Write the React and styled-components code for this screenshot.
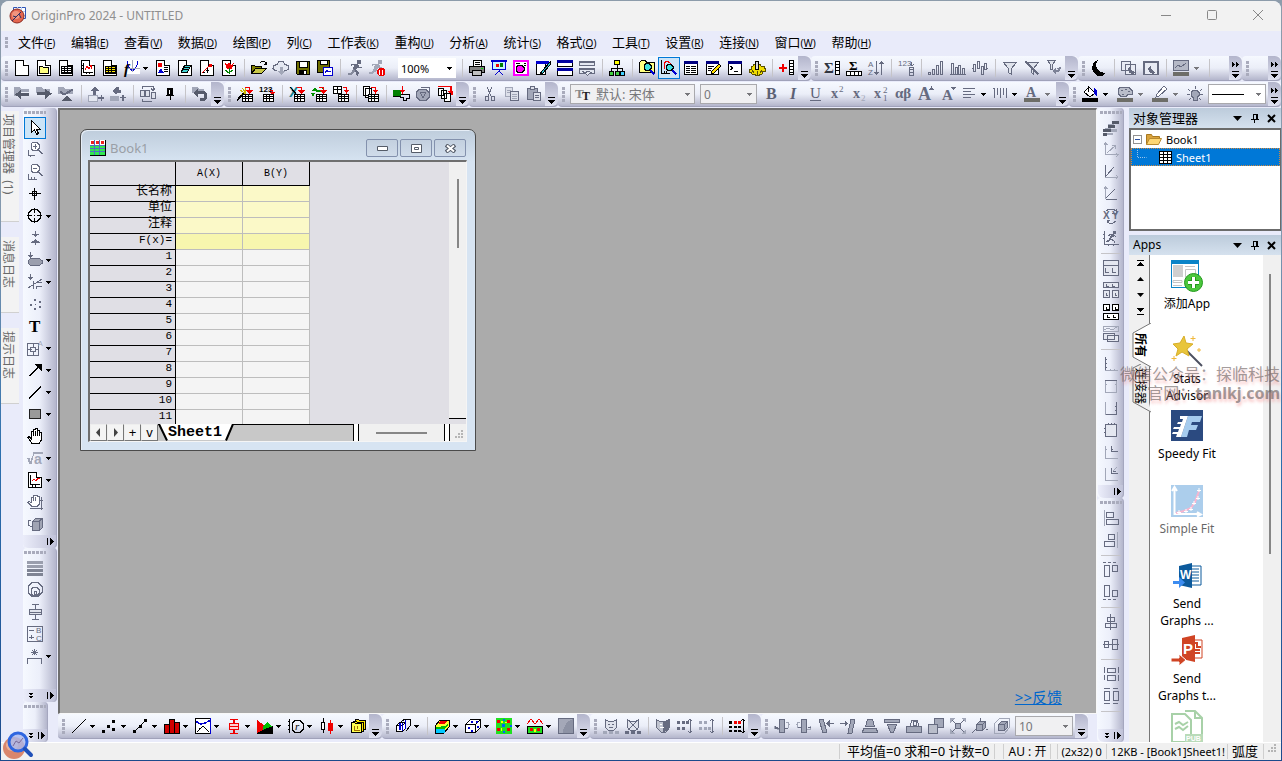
import styled, { createGlobalStyle, css } from 'styled-components';

const GlobalStyle = createGlobalStyle`
  *{ box-sizing:border-box; }
  body{
    margin:0;
    font-family:"Noto Sans","Noto Sans CJK SC",sans-serif;
    font-size:12px;
    color:#000;
    overflow:hidden;
  }
  button,select{ font:inherit; color:inherit; }
`;

const K = '#000';
const G = '#666b80';
const D = '#a2a7b8';
const W = '#fff';
const R = '#f00000';
const B = '#0000d0';
const Y = '#ffff80';
const N = 'none';
const SERIF = '"Liberation Serif",serif';
const SANS = '"Liberation Sans",sans-serif';

const page = [[K, W, 'M1.5.5h8l5 5v10h-13z'], [K, W, 'M9.5.5v5h5']];
const grid = (x, y, c = K, f = W) => [[c, f, `M${x}.5 ${y}.5h10v7h-10z`], [c, N, `M${x + 3}.5 ${y}v8M${x + 6}.5 ${y}v8M${x} ${y + 2}.5h10M${x} ${y + 4}.5h10`]];
const redArrow = [[R, N, 'M8 1.5h4.5v4'], [N, R, 'M9 4h7l-3.500 4z']];
const cube = (x, y, c, f = N) => [[c, f, `M${x}.5 ${y + 3}.5h6v6h-6zl3-3h6v6l-3 3M${x + 6}.5 ${y + 3}.5l3-3`]];

// every icon lives on a 16x16 board: [stroke, fill, path] or { t: text }
const icons = {
  newProject: page,
  newFolder: [...page, [K, Y, 'M3.5 6.500h3l1 1h5v6h-9z']],
  newSheet: [...page, ...grid(3, 6), [K, N, 'M3 12.500h10v1']],
  newGraph: [...page, [K, N, 'M3.500 3v9.500h9M2 5.500h1M2 8.500h1M6.500 13v1M9.500 13v1'], [R, N, 'M5 10l2-4 2 3 2-4 1 4']],
  newMatrix: [...page, ...grid(3, 6, K, '#ffe800'), [K, N, 'M3 12.500h10v1']],
  newFunction: [[N, W, 'M3 0h13v14h-13z'], [B, N, 'M3.500 1v3l2 4 3 3 3-3 2-4v-3'], [D, N, 'M3 8.500h13M8.500 0v12'], { t: 'f', x: 0, y: 14, z: 15, i: 1, w: 700, ff: SERIF }],
  newLayout: [...page, [N, R, 'M3 3h4v4h-4z'], [N, B, 'M3 13l3-5 3 5z'], [K, N, 'M9 7.500h4M9 9.500h4M9 11.500h4']],
  newNotes: [...page, [K, '#40d0d0', 'M4.500 11.500l3-6h6l-3 7h-6z'], [K, N, 'M6 9.500h5M7 7.500h5']],
  newImage: [...page, [R, N, 'M3 13l9-9'], [K, N, 'M7 10.500h3M8.500 8v5M4 12.500h2'], [N, R, 'M10 4h3v3h-3z']],
  newTulip: [...page, [N, R, 'M4 3l2 2 2-3 2 3 3-2-2 6h-5z'], ['#008000', N, 'M8.500 8v6M4 10l4 3 4-3M5 10l3 3 3-3']],
  open: [[K, '#808000', 'M.5 5.500h3l1 1h6v7h-10z'], [K, '#c8c848', 'M.5 13.500l4-5h11l-5 5z'], [K, N, 'M9 3l2-2 3 1 1 2M13 4.500h2v-3']],
  cloud: [[G, '#e4e8f2', 'M4 10.500h-2l-2-2 1-3 3-1 2-3h4l2 3 3 1v4l-2 1h-2'], [N, D, 'M7 7h3v4h2l-3.500 4-3.500-4h2z']],
  save: [[K, '#707000', 'M1.500 1.500h13v13h-12l-1-1z'], [K, W, 'M4.500 1.500h8v6h-8z'], [N, K, 'M4 10h8v5h-8z'], [N, W, 'M9 11h2v3h-2z']],
  saveTemplate: [[K, '#707000', 'M.5.5h12v12h-12z'], [K, W, 'M3.500.5h7v4h-7z'], [B, W, 'M6.500 7.500h9v8h-9z'], [B, N, 'M8 13l2-3 1 2 3-1']],
  run: [[G, N, 'M5 4.500h3l3 1 1 2h3M4 6l1-2'], [N, G, 'M10 0h4v4h-4zM7 4h4l1 2-3 4 3 2-1 4-2-1v-2l-3-3z'], [N, '#858a9c', 'M6 9l2 2-3 4h-4v-2h3z']],
  runStop: [[D, N, 'M4 4.500h3l3 1 1 2h2M3 6l1-2'], [N, D, 'M9 0h4v4h-4zM6 4h4l1 2-3 4-2 2-3 2h-3v-2h3l2-4z'], [N, R, 'M8 10l2-2h4l2 2v4l-2 2h-4l-2-2z'], [W, N, 'M10.500 9.500v5M13.500 9.500v5']],
  print: [[K, W, 'M4.500.5h8v6h-8z'], [K, N, 'M6 2.500h5M6 4.500h5'], [K, '#808080', 'M.5 6.500h15v6h-15z'], [K, '#c0c0c0', 'M3.500 10.500h9v5h-9z'], [N, '#00e000', 'M12 8h2v1h-2z']],
  slideshow: [[B, '#c8f4ff', 'M1.500 1.500h13v8h-13z'], [B, N, 'M0 .5h16M0 1.500h16M8 10v2M4 15l4-4 4 4'], [N, R, 'M5 4h3v3h-3z'], [N, '#008000', 'M9 3h3v4h-3z']],
  origin: [['#f0f', W, 'M1.500 1.500h13v13h-13z'], ['#f0f', N, 'M.5.5h15v15h-15z'], [K, '#f0f', 'M5 5.500h4l2 2v3l-2 2h-4l-2-2v-3z'], [K, N, 'M3 3.500h4M11 3.500h2M11 5.500h2']],
  customScript: [[K, W, 'M1.500 3.500h9v11h-9z'], [N, B, 'M1 1h13v3h-13z'], [K, '#30c0d0', 'M15 2l-8 9-2 3 3-1 7-8z']],
  tileRows: [[K, W, 'M.5.5h15v6h-15zM.5 8.500h15v7h-15z'], [N, '#0000a0', 'M0 0h16v3h-16zM0 8h16v3h-16z']],
  envelopes: [[G, '#e4e8f2', 'M.5 1.500h15v4h-15z'], [G, N, 'M0 2.500h16'], [G, '#e4e8f2', 'M.5 8.500h15v5h-5l-2 2-2-2h-6z'], [G, N, 'M0 9.500h16M3 11l3 2 3-2 4 2']],
  hierarchy: [[K, N, 'M8 5v3M2.500 11v-2.500h11v2.500M8 8v3'], [K, '#ff0', 'M5.500.5h5v4h-5z'], [K, '#40d040', 'M.5 11.500h4v4h-4zM6 11.500h4v4h-4z'], [K, '#40d0ff', 'M11.500 11.500h4v4h-4z']],
  findFolder: [[K, Y, 'M.5 2.500l2-2h4l1 2h8v10h-15z'], [K, '#40e0e0', 'M5 5.500l2-2h3l2 2v3l-2 2h-3l-2-2z'], [B, N, 'M11 10l4 4M12 10l4 4M11 11l4 4']],
  findGraph: [[K, N, 'M.5 0v13h8M3 11v2M5 11v2'], [R, N, 'M3 9v-6l3-2 3 2v5'], [K, '#40e0e0', 'M5 6.500l2-2h3l2 2v2l-2 2h-3l-2-2z'], [B, N, 'M11 10l4 4M12 10l4 4M11 11l4 4']],
  results: [[K, W, 'M1.500 1.500h13v13h-13z'], [N, '#000080', 'M1 1h14v3h-14z'], [K, N, 'M3 6.500h4M8 6.500h5M3 8.500h4M8 8.500h5M3 10.500h4M8 10.500h5M3 12.500h4M8 12.500h5']],
  notesEdit: [[K, W, 'M1.500 1.500h12v13h-12z'], [N, '#000080', 'M1 1h13v3h-13z'], [K, N, 'M3 6.500h6M3 8.500h4M3 10.500h3'], [K, '#ffe000', 'M14 4l2 2-7 7-3 1 1-3z']],
  command: [[K, W, 'M1.500 1.500h13v13h-13z'], [N, '#000080', 'M1 1h14v3h-14z'], [K, N, 'M3 6l3 2-3 2M7 11.500h4']],
  gear: [['#5a5000', '#f0dc00', 'M2 6h2l1-2h6l1 2h3v2h1v3h-2l-1 3h-3v1h-4v-1h-3l-1-2h-2v-3h2z'], [K, '#d8d8d8', 'M6.500 1.500h3v8h-3z'], ['#5a5000', N, 'M3 10l2 3M13 10l-2 3M8 11v4']],
  addColumn: [[R, N, 'M0 7.500h8M4.500 3.500v8M0 8.500h8M3.500 3.500v8'], [K, W, 'M10.500.5h4v14h-4z'], [K, N, 'M10 3.500h4M10 6.500h4M10 9.500h4M10 12.500h4']],
  sumColumn: [{ t: 'Σ', x: 0, y: 13, z: 15, ff: SERIF, w: 700, c: '#30343f' }, [K, W, 'M11.500 1.500h4v13h-4z'], [K, N, 'M11 4.500h4M11 7.500h4M11 10.500h4']],
  sumRow: [{ t: 'Σ', x: 3, y: 10, z: 13, ff: SERIF, w: 700 }, [K, W, 'M.5 11.500h15v4h-15z'], [K, N, 'M4.500 11v4M8.500 11v4M12.500 11v4']],
  sort: [{ t: 'A', x: 0, y: 7, z: 8, ff: SANS, c: G }, { t: 'Z', x: 0, y: 15, z: 8, ff: SANS, c: G }, [G, N, 'M8.500 1v13M6.500 12l2 2 2-2M13.500 2v13M11.500 4l2-2 2 2']],
  numbers: [{ t: '123', x: 0, y: 6, z: 8, ff: SANS, c: G }, [G, N, 'M13.500 2v3M12 4l2 2 2-2M11.500 7.500h4v8h-4zM11 9.500h4M11 12.500h4']],
  bars: [[G, N, 'M.5 12.500h2v2h-2zM4.500 9.500h2v5h-2zM8.500 5.500h2v9h-2zM12.500 1.500h2v13h-2z']],
  histogram: [[G, N, 'M0 14.500h16M1.500 3.500h2v11h-2zM5.500 7.500h2v7h-2zM8.500 5.500h2v9h-2zM12.500 8.500h2v6h-2z']],
  waveBars: [[G, N, 'M0 8.500h1M1.500 4.500h2v7h-2zM5.500 1.500h2v7h-2zM9.500 6.500h2v8h-2zM12.500 3.500h2v6h-2zM15 8.500h1']],
  filter: [[G, '#dfe3ec', 'M1.500 2.500h13l-5 6v6l-3-2v-4z']],
  filterOff: [[G, '#dfe3ec', 'M2.500 2.500h12l-5 6v6l-2-2v-4z'], [G, N, 'M1 1l13 13M2 1l13 13M1 2l13 13']],
  filterRedo: [[G, '#dfe3ec', 'M1.500.5h8l-3 4v5h-2v-5z'], [N, '#7d8297', 'M6 11l4-3v2h3v2h-3v3zM15 7l-1 5-4-4z']],
  moon: [[N, K, 'M7 0l-4 2-2 5 1 5 4 4h5l3-3-5-1-3-3-1-5z']],
  moonPages: [[G, '#e8ebf4', 'M.5 1.500h9v9h-9zM4.500 4.500h10v10h-10z'], [N, G, 'M9 6l-2 3 1 4 4 1 2-2-3-1-2-2z']],
  moonWindow: [[G, '#e8ebf4', 'M.5 1.500h15v13h-15z'], [G, N, 'M0 2.500h16M1.500 2v12M14.500 2v12'], [N, G, 'M8 5l-3 3 1 4 4 2 2-2-3-2-1-2z']],
  speedMode: [[G, '#b5b9c6', 'M.5.5h15v10h-15z'], [G, N, 'M2 8l3-3 3 2 5-4'], [N, '#6d6d68', 'M0 12h16v4h-16z']],

  back: [[N, D, 'M0 1h6l1 2h8v3h-15z'], [N, D, 'M0 4h5v6h-5z'], [N, '#565b6b', 'M7 4v3h8v3h-8v3l-6-4.500z']],
  forward: [[N, D, 'M0 1h6l1 2h7v4h-14z'], [N, '#565b6b', 'M9 3v3h-8v3h8v4l7-5.500z']],
  upFolder: [[N, D, 'M0 1h6l1 2h8v5h-15z'], [G, N, 'M2 5l4 3 9-5M2 6l4 3 9-5'], [N, '#565b6b', 'M3 15l6-5 6 5z']],
  importUp: [[N, G, 'M3 5l4-5 4 5h-3v4h-3v-4z'], [D, '#e4e7f0', 'M.5 9.500h9v6h-9z'], [G, N, 'M10 11.500h6M13 9v6M13.500 9v6M10 12.500h6']],
  importAgain: [[N, G, 'M2 5l4-4h3v3h2v3h-4l-1 2z'], [N, D, 'M0 10h9v5h-9z'], [G, N, 'M10 11.500h6M12.500 9v6M13.500 9v6']],
  connector: [[G, '#dfe2ec', 'M.5 4.500h4v6h-4zM5.500 4.500h4v6h-4zM11.500 6.500h4v6h-4z'], [G, N, 'M2 3v-2.500h11v4M11 2.500l2 2 2-2M2 13v2.500h10']],
  pin: [[K, K, 'M5.500 2.500h5v7h-5z'], [K, N, 'M8 9v5M4 9.500h8'], [W, N, 'M7.500 4v4']],
  undo: [[N, D, 'M0 1h6l1 2h5v4h-12z'], [N, '#565b6b', 'M1 7l5-4v2h6l3 3v4l-3 3h-4v-3h3l1-1v-2l-1-1h-5v3z']],
  importWizard: [[K, N, 'M0 15l8-9M0 14l7-8'], ['#c8b800', N, 'M3 4l6 4M8 1v7M4 8h7M5 2l4 5'], ...redArrow, ...grid(5, 8)],
  importAscii: [{ t: '123', x: 0, y: 6, z: 8, ff: SANS, w: 700 }, [R, N, 'M11 4.500h2.500v3'], [N, R, 'M11 6h5l-2.500 3z'], ...grid(4, 8)],
  importExcel: [{ t: 'X', x: 0, y: 11, z: 14, ff: SANS, w: 700, c: '#108090' }, [K, N, 'M1 1l8 9'], ...redArrow, ...grid(5, 8)],
  reimport: [[N, '#009000', 'M1 5l3-4 2 3h6v2h-6l-2-1zM0 7l4 0-2 4z'], ['#009000', N, 'M9 1l4 2'], ...redArrow, ...grid(5, 8)],
  importTable: [[K, W, 'M.5.5h8v7h-8z'], [K, N, 'M0 3.500h8M4.500 0v7'], [R, N, 'M10 1.500h3.500v4'], [N, R, 'M11 4h5l-2.500 4z'], ...grid(5, 8)],
  importStack: [[K, W, 'M.5.5h6v9h-6zM2.500 2.500h6v9h-6z'], [R, N, 'M8 1.500h4.500v4'], [N, R, 'M10 4h5l-2.500 4z'], ...grid(5, 8)],
  dataConnect: [[N, '#008000', 'M0 4h8v6h-8z'], [K, N, 'M0 10.500h8M8 8.500h8v4h-3v2h-3v-3h-3'], [R, N, 'M9.500 0v6'], [N, R, 'M7 4h5l-2.500 4z']],
  worldSync: [[G, D, 'M4 3.500h7l3 3v5l-3 3h-6l-4-4v-4z'], [G, N, 'M5 6l3 6 3-6M5 6.500h6M6 1.500h8v4']],
  cloneImport: [[R, N, 'M1 .5h13v4M13.500 1v4'], [N, R, 'M11 5h5v4h-3z'], [K, W, 'M1.500 2.500h5v7h-5zM4.500 4.500h5v8h-5zM7.500 7.500h6v8h-6z']],
  cut: [[G, N, 'M5 1l4 9M10 1l-4 9M3 10.500h3v4h-3zM9 10.500h3v4h-3z']],
  copy: [[D, '#dde0ea', 'M1.500 1.500h7v9h-7z'], [G, '#dde0ea', 'M6.500 5.500h8v9h-8z'], [D, N, 'M3 4.500h4M3 6.500h3M8 8.500h5M8 10.500h5M8 12.500h5']],
  paste: [[G, D, 'M1.500 2.500h10v11h-10z'], [G, '#dde0ea', 'M4.500.5h4v3h-4zM7.500 6.500h7v8h-7z'], [G, N, 'M9 9.500h4M9 11.500h4']],
  bold: [{ t: 'B', x: 2, y: 13, z: 16, ff: SERIF, w: 700, c: '#5c6175' }],
  italic: [{ t: 'I', x: 4, y: 13, z: 16, ff: SERIF, w: 700, i: 1, c: '#5c6175' }],
  underline: [{ t: 'U', x: 2, y: 12, z: 15, ff: SERIF, w: 400, c: '#5c6175' }, [G, N, 'M2 14.500h11']],
  superscript: [{ t: 'x', x: 1, y: 12, z: 14, ff: SERIF, w: 700, c: G }, { t: '2', x: 9, y: 6, z: 9, ff: SERIF, c: G }],
  subscript: [{ t: 'x', x: 1, y: 12, z: 14, ff: SERIF, w: 700, c: G }, { t: '2', x: 9, y: 15, z: 9, ff: SERIF, c: D }],
  supersub: [{ t: 'x', x: 0, y: 12, z: 14, ff: SERIF, w: 700, c: G }, { t: '2', x: 9, y: 7, z: 9, ff: SERIF, c: G }, { t: '1', x: 9, y: 15, z: 9, ff: SERIF, c: G }],
  greek: [{ t: 'αβ', x: -1, y: 12, z: 15, ff: SERIF, w: 700, c: G }],
  fontUp: [{ t: 'A', x: 0, y: 14, z: 18, ff: SERIF, w: 700, c: G }, [N, G, 'M11 4l2.500-4 2.500 4z']],
  fontDown: [{ t: 'A', x: 2, y: 14, z: 15, ff: SERIF, w: 700, c: G }, [N, G, 'M11 1h5l-2.500 3z']],
  align: [[G, N, 'M1 2.500h12M1 5.500h8M1 8.500h12M1 11.500h8']],
  spacing: [[G, N, 'M1.500 2v10M4.500 2v7M7.500 2v10M10.500 2v7M13.500 2v10M0 2.500h2']],
  fontColor: [{ t: 'A', x: 2, y: 11, z: 14, ff: SERIF, w: 700, c: G }, [N, '#6d6d68', 'M0 12h16v4h-16z']],
  fill: [[K, W, 'M2 6l5-5 6 6-5 4z'], [K, N, 'M6.500 0v6'], [N, B, 'M12 2l3 3v6l-3-3z'], [N, K, 'M0 12h16v4h-16z']],
  palette: [[G, '#b9bdca', 'M3 1.500h9l3 3v4h-4l-2 2h-5l-3-3v-4z'], [G, N, 'M4 4.500h2M8 3.500h2M5 8.500h2M11 5.500h2'], [N, '#6d6d68', 'M0 12h16v4h-16z']],
  pen: [[G, W, 'M12 0l3 3-8 7-3 1 1-3z'], [N, '#6d6d68', 'M0 12h16v4h-16z']],
  bulb: [[G, D, 'M6 4.500h4l2 2v3l-2 2v3h-4v-3l-2-2v-3z'], [G, N, 'M8 0v3M1 3l2 2M15 3l-2 2M0 8.500h3M13 8.500h3M2 14l2-2M14 14l-2-2']],

  pointer: [[K, W, 'M4.500.5v12l3-3 2 5 2-1-2-4h4z']],
  zoomIn: [[G, W, 'M4 1.500l2-1h4l2 2v4l-2 2h-4l-2-2v-4z'], [G, N, 'M6 4.500h4M8 2v5M11 8l4 4M12 8l4 4M1.500 8v5h6M3 13v2']],
  zoomOut: [[G, W, 'M4 1.500l2-1h4l2 2v4l-2 2h-4l-2-2v-4z'], [G, N, 'M6 4.500h4M11 8l4 4M12 8l4 4M1.500 10v5h8M4 13v2M7 13v2']],
  screenReader: [[K, N, 'M7.500 2v12M2 7.500h12M5.500 5.500h4v4h-4z']],
  dataReader: [[K, N, 'M5 1.500h5l3.500 3.500v5l-3.500 3.500h-5l-3.500-3.500v-5zM7.500 0v5M7.500 10v5M0 7.500h5M10 7.500h5M7 7.500h1']],
  dataSelector: [[G, G, 'M5.500 4l3 2 3-2zM5.500 12l3-2 3 2z'], [G, N, 'M8.500 1v5M8.500 10v5']],
  regionSelect: [[G, '#9b9fae', 'M4 6.500h8l3 2v3l-3 2h-8l-3-2v-3z'], [G, G, 'M3.500 0v4M1.500 3.500h4l-2 2z']],
  regionMask: [[G, G, 'M3.500 0v4M1.500 3.500h4l-2 2z'], [G, N, 'M1 14l14-9M6.500 7v8M9.500 8.500h5M9.500 12.500h5M9.500 12v3']],
  drawData: [[N, G, 'M7 3h2v2h-2zM12 5h2v2h-2zM3 8h2v2h-2zM8 8h1v1h-1zM12 10h2v2h-2zM7 12h2v2h-2z']],
  text: [{ t: 'T', x: 2, y: 14, z: 17, ff: SERIF, w: 700 }],
  insert: [[G, N, 'M.5 3.500h11v12h-11zM1 9.500h4M8 9.500h4M6 4v4M6 12v4M3.500 7.500h5v4h-5z'], { t: 'A', x: 11, y: 6, z: 7, ff: SANS, c: D }],
  arrow: [[K, N, 'M2 14l10-10M3 14l10-10'], [N, K, 'M7 2h8v8z']],
  line: [[K, N, 'M2 14l12-12M2 15l12-12']],
  rect: [['#202020', '#9a9a9a', 'M2.500 3.500h11v9h-11z']],
  hand: [[K, W, 'M5 15.500l-4-6 1-1 2 2v-7h2v-2h2v-1h2v2h2v2h2v8l-2 3z'], [K, N, 'M6.500 4v4M8.500 3v5M10.500 3v5M12.500 5v3']],
  formula: [[D, N, 'M0 9l2-1 2 6 3-12h9M1 9l2 5 4-11h9'], { t: 'a', x: 7, y: 14, z: 14, ff: SANS, w: 700, c: D }],
  insertGraph: [...page, [K, N, 'M3.500 3v9.500h9M5 13v2M8 13v2'], [R, N, 'M5 9l2-2 2 2 2-3 2 1']],
  panGraph: [[G, W, 'M5 12.500l-4-4 1-1 2 1v-5h2v-2h4v1h2v8l-2 2z'], [G, N, 'M6.500 4v3M8.500 3v4M3 14.500h13M14.500 3v13M13 6.500h3']],
  rotate3d: [[G, '#a0a4b3', 'M5.500 5.500l3-3h7v9l-3 3h-7z'], [G, N, 'M5 5.500h7v9M12 5.500l3-3M5 11l-4-2v-4l3-1']],
  lineStyles: [[N, '#9a9ead', 'M0 1h16v3h-16zM0 5h16v3h-16z'], [N, '#7f8494', 'M0 9h16v3h-16zM0 13h16v3h-16z']],
  circles: [[G, N, 'M5 .5h6l4 4v6l-4 4h-6l-4-4v-6zM6 5.500h4l2 2v4l-2 2h-4l-2-2v-4zM7 9.500h2v3h-2z']],
  boxWhisker: [[G, '#e0e3ec', 'M2.500 5.500h12v5h-12z'], [G, N, 'M5 .5h7M8.500 0v5M8.500 11v5M5 15.500h7M2 8.500h12']],
  legend: [[G, N, 'M.5.5h15v15h-15zM2 4.500h5M2 11.500h5M4.500 9v4'], { t: 'B', x: 9, y: 7, z: 8, ff: SANS, c: G }, { t: 'C', x: 9, y: 15, z: 8, ff: SANS, c: G }],
  asterisk: [[G, N, 'M7.500 1v6M4 4.500h7M5 2l5 5M10 2l-5 5M.5 16v-6h14v6']],

  stack: [[N, '#555a69', 'M9 1h7v3h-7zM5 5h7v3h-7zM0 9h8v3h-8zM0 13h4v3h-4z'], [N, D, 'M5 4h6v1h-6zM2 8h6v1h-6zM8 9h6v3h-6zM4 13h6v2h-6z']],
  axisXYZ: [[D, N, 'M2.500 0v12.500h13M1 3l1.500-2 2 2M13 11l2 2-2 2M4 11l8-7M9 3.500h3v3']],
  axisL: [[G, N, 'M2.500 1v12M3 12l8-9'], [D, N, 'M2 13.500h13M13 11l2 2-2 2']],
  axisUp: [[G, N, 'M2.500 13.500h11M3 12l9-9'], [D, N, 'M2.500 0v13M1 3l1.500-2 2 2']],
  swapXY: [{ t: 'X', x: 0, y: 11, z: 10, ff: SANS, c: G, w: 700 }, { t: 'Y', x: 9, y: 11, z: 10, ff: SANS, c: G, w: 700 }, [G, N, 'M3 3l3-2h4l3 2v2M13 13l-3 2h-4l-2-3M13 1v4h-4M4 15v-3h3']],
  rescale: [[G, N, 'M1.500 1v13.500h14M0 4.500h1M0 8.500h1M5 15v1M10 15v1M5 6l3-2 3 1 2 2M9 6l-2 4-3 2M8 9l3 2v2M8 6l-2 4-3 2'], [N, G, 'M10 1h3v3h-3zM8 4h3v3h-3z']],
  layerOne: [[G, '#e4e7f0', 'M.5.5h15v15h-15z'], [G, N, 'M0 5.500h15M2.500 8v4h3M9.500 8v4h3']],
  layerGrid: [[G, '#e4e7f0', 'M.5.5h15v5h-15zM.5 8.500h6v7h-6zM9.500 8.500h6v7h-6z'], [G, N, 'M3.500 2v2h2M9.500 2v2h2M3 11v2h2M12 11v2h2']],
  layerDark: [[K, W, 'M.5.5h6v6h-6zM9.500.5h6v6h-6zM.5 9.500h15v6h-15z'], [K, N, 'M3.500 3v2h2M12.500 3v2h2M4.500 11v2h2M10.500 11v2h2']],
  layerMerge: [[D, N, 'M.5.5h15v5h-15zM1 4l4-2 4 2 5-3'], [G, '#e4e7f0', 'M.5 7.500h11v6h-11zM4.500 9.500h11v6h-11z']],
  axesLeft: [[G, N, 'M2.500 1v13.500M3 3.500h1M3 7.500h1M3 11.500h1'], [D, N, 'M2 14.500h13M7 13.500h1M11 13.500h1']],
  axesTop: [[D, N, 'M2.500 2.500h11v12h-11zM2 6.500h2M12 6.500h2'], [G, N, 'M2 2.500h12']],
  axesFour: [[D, N, 'M2.500 2v12h11'], [G, N, 'M13.500 2v12.500h-11M12 6.500h1M12 10.500h1']],
  axesBox: [[G, '#e4e7f0', 'M2.500 2.500h11v12h-11z'], [G, N, 'M5 1v1M8 1v1M11 1v1M1 6h1M1 10h1']],
  axesInset: [[D, N, 'M2.500 2v12.500h12M3 5.500h1'], [G, N, 'M8.500 2v5h6M9 5.500h1']],
  axesInsetData: [[D, N, 'M2.500 2v12.500h12M10 5l4-4'], [G, N, 'M8.500 2v5h6M10 5.500h3']],
  alignLeft: [[G, N, 'M3.500 2.500h7v5h-7zM3.500 9.500h12v5h-12z'], [D, N, 'M1.500 0v16']],
  alignRight: [[G, N, 'M5.500 2.500h6v5h-6zM1.500 9.500h10v5h-10z'], [D, N, 'M14.500 0v16']],
  alignTop: [[G, N, 'M1.500 3.500h5v11h-5zM9.500 3.500h5v6h-5zM0 .5h3M5 .5h3M10 .5h3']],
  alignBottom: [[G, N, 'M1.500 1.500h5v11h-5zM9.500 6.500h5v6h-5zM0 15.500h3M5 15.500h3M10 15.500h3']],
  centerV: [[G, N, 'M4.500 3.500h7v4h-7zM2.500 9.500h11v4h-11zM7.500 0v16']],
  centerH: [[G, N, 'M1.500 5.500h4v6h-4zM9.500 3.500h5v10h-5zM0 8.500h16']],
  sameWidth: [[G, N, 'M4.500 2.500h8v4h-8zM4.500 9.500h8v5h-8zM1.500 1v6M15.500 9v6M1.500 9v5M15.500 1v6']],
  sameHeight: [[G, N, 'M1.500 3.500h5v9h-5zM10.500 3.500h5v9h-5zM1 .5h6M10 .5h5M1 15.500h6M10 15.500h5']],

  plotLine: [[K, N, 'M1 15l14-14']],
  plotScatter: [[N, K, 'M0 12h3v3h-3zM5 7h3v3h-3zM10 2h3v3h-3zM10 10h3v3h-3z']],
  plotLineSymbol: [[K, N, 'M1 14l12-12'], [N, K, 'M0 12h3v3h-3zM6 7h3v3h-3zM11 1h3v3h-3z']],
  plotColumn: [[K, '#d00000', 'M.5 6.500h5v9h-5zM5.500 1.500h5v14h-5zM10.500 4.500h5v11h-5z']],
  plotMulti: [[K, W, 'M.5.5h15v15h-15z'], [K, N, 'M2 14l6-6 6 6M4 10h2'], [N, B, 'M1 3h2v2h-2zM5 5h2v2h-2zM9 4h2v2h-2zM13 2h2v2h-2zM15 0h1v16h-1z'], [B, N, 'M1 4l5 2 4-1 4-2']],
  plotBox: [[R, '#ffd0d0', 'M3.500 5.500h9v6h-9z'], [R, N, 'M7.500 1v4M7.500 12v3M8.500 1v4M8.500 12v3M4 1.500h8M4 15.500h8M3 8.500h9']],
  plotArea: [[N, R, 'M0 2l8 6 8 0v7h-16z'], [N, '#00c000', 'M6 8l4-4 6 6v2h-10z'], [N, K, 'M0 15l8-4 8-3v8h-16z']],
  plotPolar: [[K, N, 'M1.500 1v14M7 2.500h5l3 3v6l-3 3h-5l-3-3v-6zM0 3.500h1M0 7.500h1M0 11.500h1'], { t: 'r', x: 7, y: 12, z: 11, ff: SERIF, i: 1 }],
  plotStock: [[K, W, 'M2.500 4.500h3v7h-3z'], [K, N, 'M4 0v4M4 12v3'], [N, R, 'M9 5h5v8h-5z'], [R, N, 'M11.500 2v14']],
  template: [[K, '#ffe800', 'M5.500 1.500h3l1 1h6v9h-10z'], [K, '#ffe800', 'M3.500 3.500h3l1 1h6v9h-10z'], [K, '#ffff50', 'M1.500 4.500h3l1 1h6v9h-10z'], ['#a07000', N, 'M4.500 8v4h5M7 11v-3']],
  plot3d: [...cube(1, 4, K, W), [B, N, 'M4.500 5v7M7.500 5v8M10.500 2v9M5.500 5v7'], [K, N, 'M6 4l4-3h5v7l-4 5']],
  surface: [[K, '#ffff30', 'M1 8l5-6 9 0v7l-5 6h-9z'], [N, '#00c8ff', 'M2 11h9v4h-9z'], [N, '#f00000', 'M6 3h7l-3 3h-5z'], [N, '#00c000', 'M2 9l9-1 3-3v3l-4 3h-8z']],
  scatter3d: [[K, W, 'M.5 6.500l5-5h10v8l-5 5h-10z'], [K, N, 'M.5 6.500h10v8M10.500 6.500l5-5'], [N, B, 'M3 9h2v2h-2zM6 12h2v2h-2zM6 3h2v2h-2zM11 3h2v2h-2zM12 8h2v2h-2z']],
  heatmap: [[N, '#20e020', 'M0 0h16v16h-16z'], [N, R, 'M1 2h3v3h-3zM11 2h3v3h-3zM1 10h3v3h-3zM11 10h3v3h-3z'], [N, '#0060ff', 'M6 6h3v3h-3zM7 1h2v2h-2zM7 13h2v2h-2zM14 7h2v2h-2z'], [N, '#ff0', 'M5 3h2v2h-2zM5 10h1v3h-1zM9 4h2v1h-2z']],
  contourProfile: [[R, N, 'M0 6l4-5 4 5 4-5 4 5'], [K, '#20e020', 'M.5 8.500h15v7h-15z'], [N, R, 'M3 10h3v3h-3zM10 10h3v3h-3z'], [N, '#ff0', 'M7 11h2v3h-2z']],
  ternary: [[G, '#a4a8b8', 'M.5.5h15v15h-15z'], [N, '#8d92a4', 'M5 12l4-8 6-3v14h-10z']],
  mask: [[G, '#dfe2ec', 'M2.500 1.500l3 2h5l3-2v8l-3 3h-5l-3-3z'], [G, N, 'M5 6.500h2M9 6.500h2M6 9.500h4'], [N, D, 'M0 13h4v3h-4zM6 13h4v3h-4zM12 13h4v3h-4z']],
  unmask: [[G, '#dfe2ec', 'M2.500 1.500l3 2h5l3-2v8l-3 3h-5l-3-3z'], [G, N, 'M3 2l10 10M13 2l-10 10'], [N, G, 'M0 13h4v3h-4zM6 13h4v3h-4zM12 13h4v3h-4z']],
  maskColor: [[G, '#c0c4d0', 'M1.500 1.500l3 2h6l4-2v8l-4 5h-4l-5-5z'], [N, G, 'M8 3h3l3-1v7l-4 5h-2z'], [W, N, 'M5 6.500h2M5 9.500h4']],
  maskPoints: [[N, G, 'M0 3h3v3h-3zM5 3h3v3h-3zM0 9h3v3h-3zM5 9h3v3h-3zM9 3h3v3h-3z'], [G, N, 'M13.500 1v14M11 3l2-2 2 2M11 13l2 2 2-2']],
  maskPoints2: [[N, D, 'M0 3h3v3h-3zM5 3h3v3h-3zM0 9h3v3h-3zM5 9h3v3h-3zM9 9h3v3h-3z'], [G, N, 'M13.500 1v14M11 3l2-2 2 2M11 13l2 2 2-2']],
  maskRed: [[N, K, 'M0 3h3v3h-3zM0 8h3v2h-3zM5 8h3v2h-3zM9 8h3v2h-3zM0 12h3v2h-3zM5 12h3v2h-3zM9 12h3v2h-3z'], [N, R, 'M5 3h3v3h-3zM9 3h3v3h-3z'], [K, N, 'M14.500 1v14M12 3l2-2 2 2M12 13l2 2 2-2']],
  rotCcw: [[D, N, 'M12 4.500h2l1 2-1 3M0 8l3 3h3M0 8v3'], [G, D, 'M5.500 1.500h5v13h-5z'], [G, G, 'M1.500 8v2h3M11 10.500h3']],
  rotCw: [[D, N, 'M4 4.500h-2l-1 2 1 3M11 11.500h3l1-3'], [G, D, 'M5.500 1.500h5v13h-5z'], [G, G, 'M1.500 9.500h3M11.500 9.500h3']],
  tiltLeft: [[G, D, 'M1 2l4-1 4 13-4 1z'], [G, G, 'M9 5.500h7M11 3l-2 2.500 2 2.500z']],
  tiltRight: [[G, D, 'M11 1h4l-3 14h-4z'], [G, G, 'M0 5.500h7M5 3l2 2.500-2 2.500z']],
  skewUp: [[G, D, 'M5.500 1.500h5l2 7h-9zM.5 14.500l1-4h13l1 4z']],
  skewDown: [[G, D, 'M.5 1.500h15v3h-15zM3.500 6.500h9l-3 8h-3z']],
  perspective: [[G, D, 'M.5 8.500h15v6h-15z'], [G, N, 'M4 8l2-6h5l2 6M7 3h3v4h-3z']],
  resize: [[G, D, 'M6.500.5h9v9h-9z'], [G, '#b9bdca', 'M.5 6.500h9v9h-9z']],
  fit: [[G, D, 'M5.500 5.500h5v5h-5z'], [N, D, 'M0 0h5l-5 5zM16 0v5l-5-5zM0 16v-5l5 5zM16 16h-5l5-5z'], [G, N, 'M2 2l3 3M14 2l-3 3M2 14l3-3M14 14l-3-3']],
  cubeAxes: [...cube(4, 3, G, D), [G, N, 'M0 15l4-4M8 0v4M14 11h2']],
  cubeBox: [...cube(4, 3, G, D), [D, N, 'M.5 5.500l5-5h10v9l-5 6h-10z']],
};

const Svg = styled.svg`
  display:block;
  flex:none;
`;

const Icon = ({ name }) => (
  <Svg width="16" height="16" viewBox="0 0 16 16" overflow="visible" shapeRendering="crispEdges" aria-hidden="true">
    {icons[name].map((p, i) =>
      p.t ? (
        <text key={i} x={p.x} y={p.y} fontSize={p.z} fontFamily={p.ff} fontWeight={p.w || 400} fontStyle={p.i ? 'italic' : 'normal'} fill={p.c || K}>{p.t}</text>
      ) : (
        <path key={i} stroke={p[0]} fill={p[1]} d={p[2]} />
      )
    )}
  </Svg>
);

const Caret = ({ color = K }) => (
  <Svg width="5" height="3" shapeRendering="crispEdges" aria-hidden="true"><path d="M0 0h5l-2.500 3z" fill={color} /></Svg>
);

const Desktop = styled.div`
  height:100vh;
  padding:1px;
  background:linear-gradient(#8d9cab 0,#8298ae 30%,#2c6fae 60%,#1c4a8c 100%);
`;

const Window = styled.div`
  height:100%;
  display:flex;
  flex-direction:column;
  background:#e9ebfa;
  border-radius:8px 8px 0 0;
  overflow:hidden;
  position:relative;
`;

const TitleBar = styled.header`
  height:30px;
  flex:none;
  display:flex;
  align-items:center;
  padding:0 0 2px 8px;
  background:#f2f2f2;
  color:#8f8f8f;
`;

const TitleText = styled.span`
  flex:1;
  padding-left:4px;
`;

const WinButton = styled.button`
  width:46px;
  height:28px;
  padding:0;
  border:0;
  background:none;
  display:flex;
  align-items:center;
  justify-content:center;
`;

const MenuBar = styled.nav`
  height:25px;
  flex:none;
  display:flex;
  align-items:center;
  gap:10px;
  padding:0 0 3px 4px;
`;

const MenuList = styled.div`
  flex:0 1 853px;
  display:flex;
  justify-content:space-between;
`;

const MenuItem = styled.button`
  border:0;
  padding:0;
  background:none;
  font-size:13px;
  line-height:20px;
  white-space:nowrap;
  small{ font-size:10px; }
`;

const Grip = styled.span`
  flex:none;
  ${({ $vertical }) => $vertical ? css`
    width:22px;
    height:3px;
    margin:3px 0;
    background:repeating-linear-gradient(90deg,#a9abbc 0 3px,transparent 3px 4px);
  ` : css`
    width:3px;
    height:15px;
    margin:0 3px 0 4px;
    background:repeating-linear-gradient(#a9abbc 0 3px,transparent 3px 4px);
  `}
`;

const MenuGrip = styled(Grip)`
  height:11px;
  margin:0;
`;

const ToolbarRow = styled.div`
  height:26px;
  flex:none;
  display:flex;
  padding-bottom:1px;
`;

const BottomRow = styled(ToolbarRow)`
  height:28px;
  padding-bottom:3px;
`;

const BarBox = styled.div`
  display:flex;
  align-items:center;
  flex:${({ $grow }) => ($grow ? '1 1 auto' : 'none')};
  overflow:hidden;
  ${({ $vertical, $width, $pad }) => $vertical ? css`
    flex-direction:column;
    align-items:flex-start;
    width:${$width}px;
    background:linear-gradient(90deg,#f6f9ff 0,#eceffa 50%,#b4b6cc 100%);
    border-right:1px solid #a5a7bf;
    border-radius:4px;
    padding-left:${$pad || 1}px;
  ` : css`
    min-width:39px;
    background:linear-gradient(#f6f9ff 0,#ebeef8 50%,#b4b6cc 100%);
    border-bottom:1px solid #a0a2ba;
    border-radius:4px;
  `}
`;

const ToolButton = styled.button`
  width:${({ $width }) => $width || 22}px;
  height:22px;
  flex:none;
  display:flex;
  align-items:center;
  gap:${({ $width }) => ($width > 31 ? 5 : 3)}px;
  padding:0 2px;
  border:1px solid ${({ $active }) => ($active ? '#0078d7' : 'transparent')};
  background:${({ $active }) => ($active ? '#cce4f7' : 'none')};
`;

const Separator = styled.span`
  flex:none;
  ${({ $vertical }) => $vertical ? css`
    width:20px;
    height:1px;
    margin:4px 1px 3px;
  ` : css`
    width:1px;
    height:18px;
    margin:0 3px 0 4px;
  `}
  background:#c5c4c8;
`;

const Overflow = styled.button`
  flex:none;
  border:0;
  padding:0;
  display:flex;
  ${({ $vertical }) => $vertical ? css`
    width:calc(100% + 2px);
    height:13px;
    margin:auto 0 0 -2px;
    align-items:center;
    justify-content:space-between;
    padding:0 2px 0 5px;
    background:linear-gradient(90deg,#eceefb,#c0c2d8);
    border-radius:0 0 6px 6px;
  ` : css`
    width:13px;
    align-self:stretch;
    margin-left:auto;
    flex-direction:column;
    align-items:center;
    justify-content:space-between;
    padding:6px 0 2px;
    background:linear-gradient(#b3b5cc,#dfe1f0);
    border-radius:0 6px 6px 0;
  `}
`;

const More = ({ vertical, chevrons }) => (
  <Overflow $vertical={vertical} aria-label="More buttons">
    <Svg width="7" height="6" shapeRendering="crispEdges" aria-hidden="true">
      {chevrons && <path fill={K} d={vertical ? 'M1 0h5l-2.500 2.500zM1 3h5l-2.500 2.500z' : 'M0 0l3 2.500-3 2.500zM4 0l3 2.500-3 2.500z'} />}
    </Svg>
    <Svg width="7" height="7" shapeRendering="crispEdges" aria-hidden="true">
      <path fill={K} d={vertical ? 'M0 0h1v7h-1zM3 0l4 3.500-4 3.500z' : 'M0 0h7v1h-7zM0 3h7l-3.500 4z'} />
    </Svg>
  </Overflow>
);

// suffixes: > drop-down, ^ drop-down beside a colour, ~ the same but disabled, ! pressed
const Tools = ({ list, vertical }) => list.split(' ').map((item, i) => {
  if (item === '|') return <Separator key={i} $vertical={vertical} />;
  const name = item.replace(/[>^~!]/, '');
  const mark = item.slice(name.length);
  const width = { '>': vertical ? 29 : 31, '^': 35, '~': 35 }[mark];
  return (
    <ToolButton key={i} $width={width} $active={mark === '!'} aria-label={name}>
      <Icon name={name} />
      {width && <Caret color={mark === '~' ? '#77777b' : K} />}
    </ToolButton>
  );
});

const Bar = ({ list, vertical, width, pad, grow, chevrons, children }) => (
  <BarBox $vertical={vertical} $width={width} $pad={pad} $grow={grow} role="toolbar">
    <Grip $vertical={vertical} />
    {list && <Tools list={list} vertical={vertical} />}
    {children}
    <More vertical={vertical} chevrons={chevrons} />
  </BarBox>
);

const ComboBox = styled.label`
  display:flex;
  align-items:center;
  flex:none;
  width:${({ $width }) => $width}px;
  height:20px;
  margin:0 ${({ $right }) => $right || 2}px 0 ${({ $left }) => $left || 2}px;
  padding:0 4px 0 3px;
  gap:4px;
  background:${({ $disabled }) => ($disabled ? '#f0f0f2' : '#fff')};
  border:${({ $plain }) => ($plain ? 0 : 1)}px solid #a9a9ad;
  color:${({ $disabled }) => ($disabled ? '#77777b' : '#000')};
  select{
    flex:1;
    min-width:0;
    padding:0;
    border:0;
    appearance:none;
    background:transparent;
    font-size:${({ $size }) => $size || 12}px;
    opacity:1;
  }
`;

const Combo = ({ value, label, disabled, caret, children, ...rest }) => (
  <ComboBox $disabled={disabled} {...rest}>
    {children}
    <select aria-label={label} disabled={disabled} defaultValue={value}><option>{value}</option></select>
    <Caret color={caret || (disabled ? '#77777b' : K)} />
  </ComboBox>
);

const Main = styled.div`
  flex:1;
  min-height:0;
  display:flex;
`;

const SideTabs = styled.aside`
  width:22px;
  flex:none;
  display:flex;
  flex-direction:column;
  align-items:flex-start;
  gap:15px;
  padding-top:3px;
`;

const SideTab = styled.button`
  writing-mode:vertical-rl;
  text-orientation:sideways;
  width:18px;
  height:${({ $height }) => $height}px;
  border:0;
  border-bottom:1px solid #d0d0d0;
  padding:3px 3px 3px 0;
  text-align:left;
  background:#f3f3f3;
  color:#6a6a6a;
  font-size:12px;
  line-height:15px;
  white-space:pre;
`;

const Column = styled.div`
  width:${({ $width }) => $width}px;
  flex:none;
  display:flex;
  flex-direction:column;
`;

const Spacer = styled.div`
  height:${({ $height }) => $height}px;
  display:flex;
`;

const Center = styled.div`
  flex:1;
  min-width:0;
  display:flex;
  flex-direction:column;
`;

const Workspace = styled.main`
  flex:1;
  position:relative;
  background:#ababab;
  border:1px solid #f8f8f8;
  border-top:2px solid #6e6e6e;
  border-left:2px solid #6e6e6e;
`;

const Feedback = styled.a`
  position:absolute;
  right:34px;
  bottom:5px;
  font-size:15px;
  line-height:22px;
  color:#0066cc;
`;

const Book = styled.section`
  position:absolute;
  left:20px;
  top:19px;
  width:396px;
  height:322px;
  display:flex;
  flex-direction:column;
  padding:0 8px 8px 7px;
  border:1px solid #4b4b4b;
  border-radius:7px 7px 0 0;
  background:linear-gradient(#bfcddc 0,#d7e4f2 32px);
  box-shadow:inset 1px 1px 0 #e6eef7;
`;

const BookTitle = styled.div`
  height:30px;
  flex:none;
  display:flex;
  align-items:center;
  gap:2px;
  padding:6px 1px 0 2px;
  color:#9a9fa6;
  font-size:13px;
  span{ flex:1; padding-left:2px; }
`;

const BookButton = styled.button`
  width:32px;
  height:18px;
  padding:0;
  display:flex;
  align-items:center;
  justify-content:center;
  border:1px solid #8391ad;
  border-radius:2px;
  background:linear-gradient(#c3d0df,#d0dcea);
`;

const Client = styled.div`
  flex:1;
  min-height:0;
  display:flex;
  flex-direction:column;
  border:1px solid #f5f5f5;
  border-top:2px solid #6f6f6f;
  border-left:2px solid #6f6f6f;
  background:#e0dfe5;
`;

const SheetArea = styled.div`
  flex:1;
  min-height:0;
  display:flex;
  justify-content:space-between;
  overflow:hidden;
`;

const Sheet = styled.table`
  table-layout:fixed;
  width:220px;
  height:max-content;
  border-collapse:separate;
  border-spacing:0;
  font:11px "Liberation Mono","Noto Sans CJK SC",monospace;
  th,td{
    padding:0 3px 0 0;
    height:16px;
    line-height:13px;
    font-weight:400;
    border-right:1px solid #bdbdbd;
    border-bottom:1px solid #bdbdbd;
    background:#f4f4f4;
    vertical-align:top;
  }
  th{
    text-align:right;
    background:#e0dfe5;
    border-color:#000;
  }
  thead th{
    height:24px;
    font-size:10px;
    line-height:23px;
    text-align:center;
    padding:0;
  }
  .cjk{ font-size:12px; }
`;

const MetaCell = styled.td`
  && { background:${({ $formula }) => ($formula ? '#f7f6ae' : '#fbf9c8')}; }
`;

const VScroll = styled.div`
  width:17px;
  background:#f0f0f0;
  border-bottom:1px solid #000;
  margin-bottom:5px;
  padding:17px 7px 0 8px;
  &::before{
    content:"";
    display:block;
    width:2px;
    height:69px;
    background:#868686;
  }
`;

const BookFooter = styled.div`
  height:17px;
  flex:none;
  display:flex;
  background:#fff;
`;

const NavButton = styled.button`
  width:17px;
  height:17px;
  padding:0;
  border:1px solid #777;
  border-top-color:#eee;
  border-left-color:#eee;
  background:#f4f4f4;
  font:13px/14px "Liberation Sans",sans-serif;
`;

const SheetTab = styled.button`
  position:relative;
  isolation:isolate;
  width:76px;
  padding:0 0 0 10px;
  border:0;
  text-align:left;
  background:none;
  font:bold 15px/16px "Liberation Mono",monospace;
  svg{ position:absolute; left:0; top:-1px; z-index:-1; }
`;

const TabStrip = styled.div`
  display:flex;
  width:196px;
  background:#c8c8c8;
  border-top:1px solid #000;
  border-right:1px solid #000;
  margin-right:4px;
`;

const HScroll = styled.div`
  width:87px;
  border-left:1px solid #000;
  border-right:1px solid #000;
  background:#f0f0f0;
  padding:8px 17px;
  margin-right:4px;
  &::before{
    content:"";
    display:block;
    height:2px;
    background:#868686;
  }
`;

const SizeBox = styled.div`
  flex:1;
  border-left:1px solid #000;
  background:#f0f0f0;
  display:flex;
  align-items:flex-end;
  justify-content:flex-end;
  padding:2px;
`;

const Dots = () => (
  <Svg width="9" height="9" shapeRendering="crispEdges" aria-hidden="true">
    <path fill="#b5b5b5" d="M6 0h2v2h-2zM3 3h2v2h-2zM6 3h2v2h-2zM0 6h2v2h-2zM3 6h2v2h-2zM6 6h2v2h-2z" />
  </Svg>
);

const Docks = styled.aside`
  width:152px;
  flex:none;
  display:flex;
  flex-direction:column;
`;

const DockHeader = styled.div`
  height:20px;
  flex:none;
  display:flex;
  align-items:center;
  padding:0 2px 0 4px;
  gap:2px;
  font-size:${({ $size }) => $size}px;
  line-height:18px;
  background:linear-gradient(#bccbdb,#d5e1ee);
  span{ flex:1; }
`;

const DockButton = styled.button`
  width:15px;
  height:16px;
  padding:0;
  border:0;
  background:none;
  display:flex;
  align-items:center;
  justify-content:center;
`;

const Tree = styled.div`
  height:103px;
  flex:none;
  margin-bottom:4px;
  border:2px solid #6b6b6b;
  border-right-width:1px;
  background:#fff;
`;

const TreeRow = styled.div`
  height:18px;
  display:flex;
  align-items:center;
  gap:4px;
  padding-left:2px;
  font-size:11px;
  ${({ $selected }) => $selected && css`
    background:#0078d7;
    color:#fff;
    outline:1px dotted #d08a40;
    outline-offset:-1px;
  `}
`;

const AppsBody = styled.div`
  flex:1;
  min-height:0;
  display:flex;
  background:#f0f0f0;
`;

const AppTabs = styled.div`
  width:21px;
  flex:none;
  display:flex;
  flex-direction:column;
  border-right:1px solid #777;
`;

const TabScroll = styled.button`
  height:16px;
  padding:0 0 0 2px;
  border:0;
  background:none;
  display:flex;
  align-items:center;
  justify-content:center;
`;

const AppTab = styled.button`
  position:relative;
  z-index:${({ $active }) => ($active ? 1 : 0)};
  writing-mode:vertical-rl;
  text-orientation:sideways;
  width:22px;
  height:44px;
  margin-top:${({ $active }) => ($active ? 4 : -3)}px;
  padding:0;
  border:0;
  background:none;
  font-size:12px;
  font-weight:${({ $active }) => ($active ? 700 : 400)};
  line-height:15px;
  text-align:center;
  svg{ position:absolute; left:0; top:0; z-index:-1; }
`;

const AppList = styled.div`
  width:74px;
  margin-right:auto;
  overflow:hidden;
`;

const AppPane = styled.div`
  flex:1;
  min-width:0;
  display:flex;
  margin-right:18px;
  background:#fff;
`;

const AppItem = styled.button`
  width:74px;
  height:75px;
  padding:5px 0 0;
  border:0;
  background:none;
  display:flex;
  flex-direction:column;
  align-items:center;
  gap:3px;
  line-height:17px;
  opacity:${({ $faded }) => ($faded ? 0.6 : 1)};
  svg{ width:32px; height:32px; }
`;

const ScrollThumb = styled.div`
  width:2px;
  height:280px;
  margin:19px 10px 0 -12px;
  background:#868686;
`;

const StatusBar = styled.footer`
  height:18px;
  flex:none;
  display:flex;
  justify-content:flex-end;
  align-items:center;
  background:#f0f0f0;
  border-top:1px solid #fff;
  white-space:pre;
`;

const StatusCell = styled.span`
  height:15px;
  padding:0 ${({ $right }) => $right || 4}px 0 ${({ $left }) => $left || 4}px;
  border-left:1px solid #cfcfcf;
  font-size:${({ $size }) => $size || 11}px;
  line-height:15px;
`;

const Watermark = styled.div`
  position:absolute;
  right:1px;
  top:364px;
  color:rgba(110,100,100,.65);
  font-size:16px;
  line-height:19px;
  text-align:right;
  white-space:nowrap;
  text-shadow:1px 3px 3px rgba(240,110,110,.4);
  pointer-events:none;
`;

const Magnifier = styled.div`
  position:absolute;
  left:2px;
  bottom:0;
  pointer-events:none;
`;

const menus = [
  ['文件', 'F'], ['编辑', 'E'], ['查看', 'V'], ['数据', 'D'], ['绘图', 'P'], ['列', 'C'], ['工作表', 'K'], ['重构', 'U'],
  ['分析', 'A'], ['统计', 'S'], ['格式', 'O'], ['工具', 'T'], ['设置', 'R'], ['连接', 'N'], ['窗口', 'W'], ['帮助', 'H'],
];

const metaRows = ['长名称', '单位', '注释', 'F(x)='];
const dataRows = [1, 2, 3, 4, 5, 6, 7, 8, 9, 10, 11];

const Ball = () => (
  <Svg width="18" height="18" viewBox="0 0 18 18" aria-hidden="true">
    <path d="M4.500 1.500h12v11h-12z" fill="#fff" stroke="#2f55b5" />
    <path d="M8.500 1v11M12.500 1v11M4 5.500h12M4 9.500h12" stroke="#b9cdf0" />
    <circle cx="8" cy="10" r="7" fill="#e4664f" stroke="#8a2a20" />
    <circle cx="7" cy="9" r="4" fill="#f4a08a" opacity=".8" />
    <path d="M3 15l9-9M4 10l3 1 3-3 2 4" stroke="#2c2c60" fill="none" />
  </Svg>
);

const BookIcon = () => (
  <Svg width="16" height="16" shapeRendering="crispEdges" aria-hidden="true">
    <path fill="#30e850" d="M0 0h16v16h-16z" />
    <path fill="#fff" d="M0 0h16v5h-16z" />
    <path fill="#f02020" d="M1 1h3v3h-3zM6 1h3v3h-3zM11 1h3v3h-3z" />
    <path stroke="#5070c0" d="M4.500 0v16M9.500 0v16M0 5.500h16M0 8.500h16M0 11.500h16" />
    <path stroke="#000" fill="none" d="M0 15.500h15.500v-15.500" />
  </Svg>
);

const DockTitle = ({ title, size }) => (
  <DockHeader $size={size}>
    <span>{title}</span>
    <DockButton aria-label="Menu"><Svg width="9" height="5"><path d="M0 0h9l-4.500 5z" /></Svg></DockButton>
    <DockButton aria-label="Pin"><Svg width="8" height="9" shapeRendering="crispEdges"><path d="M2.500.5h4v5h-4zM0 5.500h8M3.500 6v3M5.500 0v5" fill="none" stroke={K} /></Svg></DockButton>
    <DockButton aria-label="Close"><Svg width="9" height="9"><path d="M1 1l7 7M8 1l-7 7" stroke={K} strokeWidth="2" /></Svg></DockButton>
  </DockHeader>
);

const TabShape = ({ active }) => (
  <Svg width="22" height="66" viewBox="0 0 22 66" aria-hidden="true">
    <path d={active ? 'M22 0l-18 10v24l18 10' : 'M12 0l-8 4v34l18 10'} fill={active ? '#fff' : '#f0f0f0'} stroke="#777" />
  </Svg>
);

const apps = [
  {
    name: ['添加App'],
    art: <>
      <path d="M0 0h28v28h-28z" fill="#0a84c8" /><path d="M1 4h26v23h-26z" fill="#fff" />
      <path d="M2 5h10v12h-10z" fill="#cfcfcf" />
      <path d="M14.500 9.500h10v8h-10zM14 6.500h10M2 20.500h9v2h-9zM2 25.500h9" fill="none" stroke="#c4c4c4" />
      <circle cx="22.500" cy="22.500" r="9" fill="#4bc63c" stroke="#239a1c" />
      <path d="M22.500 17v11M17 22.500h11" stroke="#239a1c" strokeWidth="5" /><path d="M22.500 17v11M17 22.500h11" stroke="#fff" strokeWidth="3" />
    </>,
  },
  {
    name: ['Stats', 'Advisor'],
    art: <>
      <path d="M16 16l15 15" stroke="#4c5060" strokeWidth="2" />
      <path d="M13 1l2 7 7 1-6 5 2 7-7-4-6 4 2-7-5-5 7-1z" fill="#e8c53c" stroke="#d8ae28" />
      <path d="M22 1v5M19.500 3.500h5M3 21v5M.5 23.500h5M28 13v4M26 15h4" stroke="#f0b83c" />
    </>,
  },
  {
    name: ['Speedy Fit'],
    art: <>
      <path d="M0 0h32v31h-32z" fill="#2b4a80" />
      <path d="M17 6h14l-2 6h-8l-1 3h7l-2 5h-7l-2 7h-6z" fill="#a5cbee" />
      <path d="M9 6h8l-7 21h-5l1-3h-5l1-2h5l1-3h-6l1-2h6l1-3h-4l1-2h4l1-3h-3z" fill="#fff" />
    </>,
  },
  {
    name: ['Simple Fit'],
    faded: true,
    art: <>
      <path d="M0 0h32v32h-32z" fill="#76aee0" />
      <path d="M3.500 3v26h26M1 6l2.500-4 2.500 4M26 27l4 2.500-4 2" fill="none" stroke="#fff" strokeWidth="2" />
      <path d="M5 28l8-2 7-3 4-6 4-11" fill="none" stroke="#f585b0" strokeWidth="2" />
      <path d="M6 27.500h4M8 25v4M13 26.500h4M15 24v4M18 24.500h4M20 22v4M21 18.500h4M23 16v4M25 13.500h4M27 11v4M26 5.500h4M28 3v4" stroke="#fff" />
    </>,
  },
  {
    name: ['Send', 'Graphs ...'],
    art: <>
      <path d="M20 6h10v19h-10z" fill="#fff" stroke="#0c5a9c" /><path d="M21 9h7M21 12h7M21 15h7M21 18h7M21 21h7" stroke="#0c5a9c" />
      <path d="M8 6l13-3v25l-13-3z" fill="#0c5a9c" />
      <text x="9" y="19" fontSize="12" fontWeight="700" fill="#fff" fontFamily={SANS}>W</text>
      <path d="M2 21h6v-4l6 5.500-6 5.500v-4h-6z" fill="#3c8cf0" />
    </>,
  },
  {
    name: ['Send', 'Graphs t...'],
    art: <>
      <path d="M20 5h11v18h-11z" fill="#fff" stroke="#d04424" /><path d="M23 8h3v4h4M22 15h7M22 18h7" stroke="#d04424" strokeWidth="2" fill="none" />
      <path d="M11 3l13-3v27l-13-3z" fill="#d04424" />
      <text x="12" y="19" fontSize="15" fontWeight="700" fill="#fff" fontFamily={SANS}>P</text>
      <path d="M0 23h8v-4l7 6-7 6v-4h-8z" fill="#d04424" stroke="#fff" />
    </>,
  },
  {
    name: [],
    faded: true,
    art: <>
      <path d="M1 4h13l6 6v22h-19zM14 1h10l7 7v24" fill="none" stroke="#6fb46f" strokeWidth="2" />
      <path d="M4 14l4-2 4 3 5-3M4 19l4-2 4 3 5-4M24 2v6h6" fill="none" stroke="#6fb46f" strokeWidth="2" />
      <path d="M14 24h18v8h-18z" fill="#8cc48c" /><text x="15" y="31" fontSize="7" fontWeight="700" fill="#fff" fontFamily={SANS}>PUB</text>
    </>,
  },
];

const BookWindow = () => (
  <Book>
    <BookTitle>
      <BookIcon />
      <span>Book1</span>
      <BookButton aria-label="Minimize"><Svg width="11" height="5"><path d="M.5.5h10v4h-10z" fill="#fff" stroke="#555c68" /></Svg></BookButton>
      <BookButton aria-label="Maximize"><Svg width="11" height="9"><path d="M.5.5h10v8h-10zM3.500 3.500h4v2h-4z" fill="#fff" stroke="#555c68" /></Svg></BookButton>
      <BookButton aria-label="Close"><Svg width="11" height="9"><path d="M1 1l9 7M10 1l-9 7" stroke="#555c68" strokeWidth="4" /><path d="M2 1.500l7 6M9 1.500l-7 6" stroke="#fff" strokeWidth="2" /></Svg></BookButton>
    </BookTitle>
    <Client>
      <SheetArea>
        <Sheet>
          <colgroup><col width="86" /><col width="67" /><col width="67" /></colgroup>
          <thead><tr><th aria-label="Rows" /><th>A(X)</th><th>B(Y)</th></tr></thead>
          <tbody>
            {metaRows.map((row) => (
              <tr key={row}>
                <th className={row === 'F(x)=' ? '' : 'cjk'}>{row}</th>
                <MetaCell $formula={row === 'F(x)='} /><MetaCell $formula={row === 'F(x)='} />
              </tr>
            ))}
            {dataRows.map((row) => <tr key={row}><th>{row}</th><td /><td /></tr>)}
          </tbody>
        </Sheet>
        <VScroll />
      </SheetArea>
      <BookFooter>
        <NavButton aria-label="Previous sheet"><Svg width="15" height="9"><path d="M9 0v9l-4-4.500z" fill="#444" /></Svg></NavButton>
        <NavButton aria-label="Next sheet"><Svg width="15" height="9"><path d="M6 0v9l4-4.500z" fill="#444" /></Svg></NavButton>
        <NavButton>+</NavButton>
        <NavButton>v</NavButton>
        <TabStrip>
          <SheetTab>
            <Svg width="76" height="17" aria-hidden="true"><path d="M1 0h74l-7 16h-59z" fill="#fff" /><path d="M1 0l8 16.500M75 0l-7 16.500" stroke={K} strokeWidth="2" /></Svg>
            Sheet1
          </SheetTab>
        </TabStrip>
        <HScroll />
        <SizeBox><Dots /></SizeBox>
      </BookFooter>
    </Client>
  </Book>
);

const App = () => (
  <Desktop>
    <GlobalStyle />
    <Window>
      <TitleBar>
        <Ball />
        <TitleText>OriginPro 2024 - UNTITLED</TitleText>
        <WinButton aria-label="Minimize"><Svg width="10" height="10"><path d="M0 5.500h10" stroke="#888" /></Svg></WinButton>
        <WinButton aria-label="Maximize"><Svg width="10" height="10"><rect x=".5" y=".5" width="9" height="9" rx="1" fill="none" stroke="#888" /></Svg></WinButton>
        <WinButton aria-label="Close"><Svg width="10" height="10"><path d="M0 0l10 10M10 0l-10 10" stroke="#888" /></Svg></WinButton>
      </TitleBar>
      <MenuBar>
        <MenuGrip />
        <MenuList>
          {menus.map(([label, key]) => <MenuItem key={key}>{label}<small>(<u>{key}</u>)</small></MenuItem>)}
        </MenuList>
      </MenuBar>

      <ToolbarRow>
        <Bar>
          <Tools list="newProject newFolder newSheet newGraph newMatrix newFunction> newLayout newNotes newImage newTulip | open cloud save saveTemplate | run runStop" />
          <Combo label="Zoom" value="100%" $width={58} $left={10} $plain $size={11} />
          <Tools list="| print slideshow origin customScript tileRows envelopes | hierarchy | findFolder findGraph! results notesEdit command gear | addColumn" />
        </Bar>
        <Bar list="sumColumn sumRow sort | numbers | bars histogram waveBars | filter filterOff filterRedo" />
        <Bar list="moon | moonPages moonWindow | speedMode~ |" grow chevrons />
        <Bar chevrons />
      </ToolbarRow>
      <ToolbarRow>
        <Bar list="back forward upFolder | importUp importAgain | connector pin | undo" />
        <Bar list="importWizard importAscii | importExcel reimport importTable | importStack | dataConnect worldSync cloneImport" />
        <Bar list="cut copy paste" />
        <Bar>
          <Combo label="Font" value="默认: 宋体" disabled $width={125} $size={13}>
            <Svg width="18" height="16" aria-hidden="true">
              <text x="1" y="12" fontSize="13" fontWeight="700" fill="#888" fontFamily={SERIF}>T</text>
              <text x="8" y="14" fontSize="12" fontWeight="700" fill="#222" fontFamily={SERIF}>T</text>
            </Svg>
          </Combo>
          <Combo label="Font size" value="0" disabled $width={57} $left={3} $right={4} />
          <Tools list="bold italic underline superscript subscript supersub greek fontUp fontDown align> spacing> fontColor~" />
        </Bar>
        <Bar grow chevrons>
          <Tools list="fill^ palette~ pen~ bulb" />
          <ComboBox $width={58}>
            <Svg width="34" height="3" aria-hidden="true"><path d="M0 1.500h32" stroke={K} /></Svg>
            <select aria-label="Line style" defaultValue=""><option value="" /></select>
            <Caret color="#77777b" />
          </ComboBox>
        </Bar>
      </ToolbarRow>

      <Main>
        <SideTabs>
          <SideTab $height={111}>项目管理器  (1)</SideTab>
          <SideTab $height={76}>消息日志</SideTab>
          <SideTab $height={76}>提示日志</SideTab>
        </SideTabs>
        <Column $width={35}>
          <Bar vertical width={34} list="pointer! zoomIn zoomOut screenReader dataReader> dataSelector regionSelect> regionMask> drawData text insert> arrow> line> rect> hand formula> insertGraph> panGraph rotate3d" />
          <Bar vertical grow width={34} chevrons list="lineStyles circles boxWhisker legend asterisk>" />
          <Spacer $height={40}><Bar vertical width={25} chevrons /></Spacer>
        </Column>
        <Center>
          <Workspace>
            <BookWindow />
            <Feedback href="#feedback">&gt;&gt;反馈</Feedback>
          </Workspace>
          <BottomRow>
            <Bar list="plotLine> plotScatter> plotLineSymbol> plotColumn> plotMulti> plotBox> plotArea> plotPolar> plotStock> template" />
            <Bar list="plot3d> | surface> scatter3d> heatmap> contourProfile> ternary" />
            <Bar list="mask unmask | maskColor maskPoints maskPoints2 | maskRed" />
            <Bar>
              <Tools list="rotCcw rotCw tiltLeft tiltRight skewUp skewDown perspective resize fit cubeAxes cubeBox" />
              <Combo label="Step" value="10" disabled $width={58} />
            </Bar>
          </BottomRow>
        </Center>
        <Column $width={32}>
          <Bar vertical width={27} pad={3} list="stack axisXYZ axisL axisUp swapXY rescale | layerOne layerGrid layerDark layerMerge | axesLeft axesTop axesFour axesBox axesInset axesInsetData" />
          <Bar vertical grow width={27} pad={3} chevrons list="alignLeft alignRight | alignTop alignBottom | centerV centerH | sameWidth sameHeight |" />
        </Column>
        <Docks>
          <DockTitle title="对象管理器" size={13} />
          <Tree>
            <TreeRow>
              <Svg width="9" height="9" shapeRendering="crispEdges"><path d="M.5.5h8v8h-8z" fill="#fff" stroke="#919191" /><path d="M2 4.500h5" stroke="#2b50a0" /></Svg>
              <Svg width="16" height="12"><path d="M.5 11.500v-10h5l1 2h7v3" fill="#d9a33c" stroke="#a87820" /><path d="M.5 11.500l3-6h12l-3 6z" fill="#ffd773" stroke="#b98a30" /></Svg>
              Book1
            </TreeRow>
            <TreeRow $selected>
              <Svg width="22" height="14"><path d="M4.500 0v7.500h9" stroke="#9cc4ea" strokeDasharray="1 1" fill="none" /></Svg>
              <Svg width="13" height="13" shapeRendering="crispEdges"><path d="M.5.5h12v12h-12z" fill="#fff" stroke={K} /><path d="M4.500 0v13M8.500 0v13M0 3.500h13M0 6.500h13M0 9.500h13" stroke={K} /></Svg>
              Sheet1
            </TreeRow>
          </Tree>
          <DockTitle title="Apps" size={12} />
          <AppsBody>
            <AppTabs>
              <TabScroll aria-label="First"><Svg width="7" height="7" shapeRendering="crispEdges"><path d="M0 0h7v1h-7zM0 6h7l-3.500-4z" /></Svg></TabScroll>
              <TabScroll aria-label="Up"><Svg width="7" height="4"><path d="M0 4h7l-3.500-4z" /></Svg></TabScroll>
              <TabScroll aria-label="Down"><Svg width="7" height="4"><path d="M0 0h7l-3.500 4z" /></Svg></TabScroll>
              <TabScroll aria-label="Last"><Svg width="7" height="7" shapeRendering="crispEdges"><path d="M0 0h7l-3.500 4zM0 6h7v1h-7z" /></Svg></TabScroll>
              <AppTab $active><TabShape active />所有</AppTab>
              <AppTab><TabShape />连接器</AppTab>
            </AppTabs>
            <AppPane>
              <AppList>
                {apps.map((app, i) => (
                  <AppItem key={i} $faded={app.faded}>
                    <Svg viewBox="0 0 32 32" aria-hidden="true">{app.art}</Svg>
                    <span>{app.name[0]}{app.name[1] && <><br />{app.name[1]}</>}</span>
                  </AppItem>
                ))}
              </AppList>
            </AppPane>
            <ScrollThumb />
          </AppsBody>
        </Docks>
      </Main>

      <StatusBar>
        <StatusCell $left={7} $right={5} $size={13}>平均值=0 求和=0 计数=0</StatusCell>
        <StatusCell />
        <StatusCell $size={12}>AU : 开</StatusCell>
        <StatusCell $left={3} $right={3} />
        <StatusCell $left={3}>(2x32) 0</StatusCell>
        <StatusCell $right={2}>12KB - [Book1]Sheet1!</StatusCell>
        <StatusCell $size={13} $right={5}>弧度</StatusCell>
        <StatusCell><Dots /></StatusCell>
      </StatusBar>

      <Magnifier>
        <Svg width="32" height="30" viewBox="0 0 32 30" aria-hidden="true">
          <circle cx="11" cy="18" r="11" fill="#d9866c" />
          <circle cx="9" cy="15" r="6" fill="#eab09a" />
          <circle cx="15" cy="12" r="9" fill="#a9b8ee" fillOpacity=".8" stroke="#2f66e0" strokeWidth="3" />
          <path d="M10 16l3-5 3 2 4-5" stroke="#7a6a9a" fill="none" />
          <path d="M22 19l6 6" stroke="#2050b8" strokeWidth="4" strokeLinecap="round" />
        </Svg>
      </Magnifier>
      <Watermark>微信公众号：探临科技<br />官网：<b>tanlkj.com</b></Watermark>
    </Window>
  </Desktop>
);

export default App;
